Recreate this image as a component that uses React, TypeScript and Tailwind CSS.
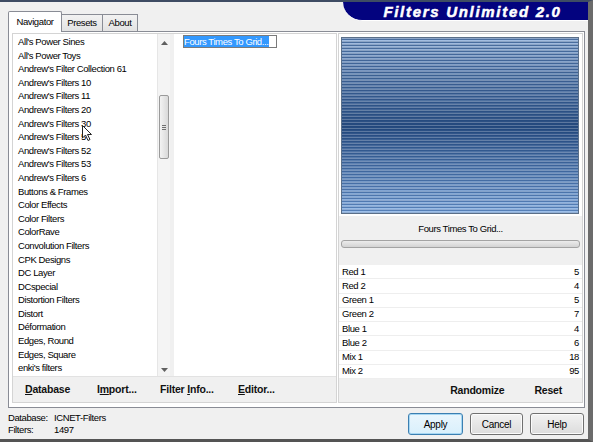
import React from 'react';

const UI = "font-['Liberation_Sans',Arial,sans-serif]";
const SMALL = 'text-[9.5px] tracking-[-0.4px]';

const filters = [
  "All's Power Sines",
  "All's Power Toys",
  "Andrew's Filter Collection 61",
  "Andrew's Filters 10",
  "Andrew's Filters 11",
  "Andrew's Filters 20",
  "Andrew's Filters 30",
  "Andrew's Filters 5",
  "Andrew's Filters 52",
  "Andrew's Filters 53",
  "Andrew's Filters 6",
  'Buttons & Frames',
  'Color Effects',
  'Color Filters',
  'ColorRave',
  'Convolution Filters',
  'CPK Designs',
  'DC Layer',
  'DCspecial',
  'Distortion Filters',
  'Distort',
  'Déformation',
  'Edges, Round',
  'Edges, Square',
  "enki's filters",
  'FFG???',
];

const params: [string, number][] = [
  ['Red 1', 5],
  ['Red 2', 4],
  ['Green 1', 5],
  ['Green 2', 7],
  ['Blue 1', 4],
  ['Blue 2', 6],
  ['Mix 1', 18],
  ['Mix 2', 95],
];

function mix(a: number[], b: number[], t: number) {
  const c = a.map((v, i) => Math.round(v + (b[i] - v) * t));
  return `rgb(${c[0]},${c[1]},${c[2]})`;
}

// striped preview of the "Fours Times To Grid" effect
function Preview() {
  const mid = [33, 70, 123];
  const rows = Array.from({ length: 59 }, (_, i) => {
    const y = i * 3;
    const t = Math.min(1, Math.pow(Math.abs(y + 1.5 - 90) / 88, 0.85));
    const top = y < 90;
    const light = mix(mid, top ? [166, 192, 226] : [160, 194, 236], t);
    const dark = mix(mid, top ? [74, 110, 159] : [88, 130, 186], t);
    return (
      <g key={i}>
        <rect x={0} y={y} width={238} height={1.5} fill={light} />
        <rect x={0} y={y + 1.5} width={238} height={1.5} fill={dark} />
      </g>
    );
  });
  return (
    <svg width={238} height={177} viewBox="0 0 238 177" className="block">
      {rows}
      <rect x={0.5} y={0.5} width={237} height={176} fill="none" stroke="#5b6f88" strokeWidth={1} />
    </svg>
  );
}

function Scrollbar() {
  return (
    <div className="relative w-[13px] h-full bg-[#f4f4f4] border-l border-[#e6e6e6]">
      <svg width={7} height={4} viewBox="0 0 7 4" className="absolute left-[3px] top-[7px]">
        <path d="M0 4 L3.5 0 L7 4 Z" fill="#606060" />
      </svg>
      <div className="absolute left-[1px] top-[61px] w-[10px] h-[64px] rounded-[2px] border border-[#9a9a9a] bg-gradient-to-r from-[#f3f3f3] to-[#d9d9d9] flex flex-col items-center justify-center gap-[1px]">
        <div className="w-[4px] h-px bg-[#707070]" />
        <div className="w-[4px] h-px bg-[#707070]" />
        <div className="w-[4px] h-px bg-[#707070]" />
      </div>
      <svg width={7} height={4} viewBox="0 0 7 4" className="absolute left-[3px] bottom-[4px]">
        <path d="M0 0 L3.5 4 L7 0 Z" fill="#606060" />
      </svg>
    </div>
  );
}

function Cursor() {
  return (
    <svg width={11} height={17} viewBox="0 0 11 17" className="absolute left-[69px] top-[91px]">
      <path d="M0.5 0.5 L0.5 13 L3.5 10 L6 15.5 L8 14.5 L5.5 9.5 L9.5 9.5 Z" fill="#ffffff" stroke="#222" strokeWidth={1} strokeLinejoin="round" />
    </svg>
  );
}

function DlgButton({ label, width, focus }: { label: string; width: string; focus?: boolean }) {
  return (
    <button
      type="button"
      className={`${width} h-[22px] rounded-[3px] border text-[10px] tracking-[-0.3px] text-black bg-gradient-to-b ${
        focus
          ? 'border-[#3c7fb1] from-[#eaf6fd] to-[#d9f0fc] shadow-[inset_0_0_0_1px_#a6d7f3]'
          : 'border-[#707070] from-[#f2f2f2] to-[#dcdcdc] shadow-[inset_0_0_0_1px_#fbfbfb]'
      }`}
    >
      {label}
    </button>
  );
}

export default function App() {
  return (
    <div className={`${UI} w-[593px] h-[442px] overflow-hidden bg-[#f0f0f0] border-t-2 border-t-[#3e4c63] border-r-[5px] border-r-[#6b6b6b] border-b-[3px] border-b-[#545454] flex flex-col text-black`}>
      {/* header: tabs + banner */}
      <div className="h-[29px] flex justify-between items-start">
        <div className="self-end flex items-end pl-[8px] relative z-10 mb-[-1px]">
          <div className={`h-[21px] w-[54px] bg-white border border-b-0 border-[#898c95] rounded-t-[2px] flex items-center justify-center ${SMALL}`}>
            Navigator
          </div>
          <div className={`h-[17px] w-[41px] bg-gradient-to-b from-[#f2f2f2] to-[#e3e3e3] border border-b-0 border-l-0 border-[#898c95] flex items-center justify-center mb-px ${SMALL}`}>
            Presets
          </div>
          <div className={`h-[17px] w-[35px] bg-gradient-to-b from-[#f2f2f2] to-[#e3e3e3] border border-b-0 border-l-0 border-[#898c95] flex items-center justify-center mb-px ${SMALL}`}>
            About
          </div>
        </div>
        <div className="w-[245px] h-[19px] bg-[#03037f] rounded-bl-[26px] border-b border-b-white flex items-center justify-center pl-[14px]">
          <span className="text-[15px] font-bold italic tracking-[1.7px] text-white [-webkit-text-stroke:0.5px_white] leading-none">
            Filters Unlimited 2.0
          </span>
        </div>
      </div>

      {/* tab page */}
      <div className="ml-[8px] w-[577px] h-[377px] border border-[#898c95] bg-white pl-[3px] pr-px pt-px pb-[4px] flex gap-px">
        {/* left: list + selected filter */}
        <div className="w-[325px] h-full border border-[#d4d4d4] flex flex-col">
          <div className="flex-1 flex min-h-0">
            <div className={`relative w-[144px] bg-white overflow-hidden pl-[5px] pt-[1px] leading-[13.6px] ${SMALL}`}>
              {filters.map((f) => (
                <div key={f} className="whitespace-nowrap">{f}</div>
              ))}
              <Cursor />
            </div>
            <Scrollbar />
            <div className="w-[4px] bg-[#f0f0f0]" />
            <div className="flex-1 bg-white pl-[9px] pt-px">
              <div className={`w-[94px] h-[13px] border border-[#7a7a7a] bg-white flex items-center leading-none whitespace-nowrap overflow-hidden ${SMALL}`}>
                <span className="bg-[#3399ff] text-white h-full flex items-center pr-px">Fours Times To Grid...</span>
              </div>
            </div>
          </div>
          <div className="h-[26px] bg-[#f0f0f0] border-t border-[#e2e2e2] flex items-center pl-[12px] text-[10.5px] tracking-[-0.2px] font-bold text-[#111] whitespace-nowrap">
            <span className="w-[72px]"><span className="underline">D</span>atabase</span>
            <span className="w-[63px]">I<span className="underline">m</span>port...</span>
            <span className="w-[78px]">Filter <span className="underline">I</span>nfo...</span>
            <span><span className="underline">E</span>ditor...</span>
          </div>
        </div>

        {/* right: preview + parameters */}
        <div className="w-[245px] h-full border border-[#d4d4d4] flex flex-col">
          <div className="bg-white pt-[3px] pl-[2px] pb-[2px]">
            <Preview />
          </div>
          <div className="h-[49px] bg-[#f0f0f0] px-[2px] pt-[7px]">
            <div className={`text-center leading-[12px] ${SMALL}`}>Fours Times To Grid...</div>
            <div className="mt-[5px] h-[8px] rounded-[3px] border border-[#a3a3a3] bg-gradient-to-b from-[#ececec] to-[#d3d3d3]" />
          </div>
          <div className="bg-white">
            {params.map(([name, value]) => (
              <div key={name} className={`h-[14.25px] flex items-center justify-between px-[3px] border-b border-[#eeeeee] ${SMALL}`}>
                <span>{name}</span>
                <span>{value}</span>
              </div>
            ))}
          </div>
          <div className="flex-1 bg-[#f0f0f0] flex items-center justify-end pr-[20px] gap-[30px] text-[10.5px] tracking-[-0.2px] font-bold text-[#111]">
            <span>Randomize</span>
            <span>Reset</span>
          </div>
        </div>
      </div>

      {/* footer */}
      <div className="flex-1 flex justify-between pr-[4px]">
        <div className={`pl-[8px] pt-[4px] leading-[12px] ${SMALL}`}>
          <div className="flex"><span className="w-[46px]">Database:</span><span>ICNET-Filters</span></div>
          <div className="flex"><span className="w-[46px]">Filters:</span><span>1497</span></div>
        </div>
        <div className="pt-[5px] flex gap-[7px]">
          <DlgButton label="Apply" width="w-[55px]" focus />
          <DlgButton label="Cancel" width="w-[53px]" />
          <DlgButton label="Help" width="w-[54px]" />
        </div>
      </div>
    </div>
  );
}
